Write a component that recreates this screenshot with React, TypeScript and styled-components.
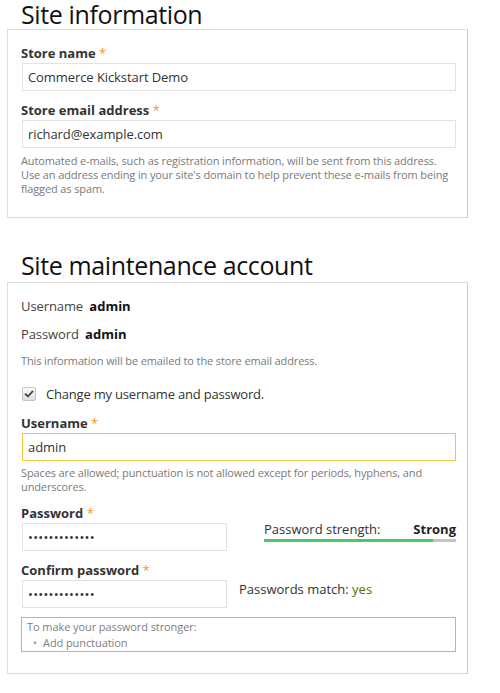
import React from 'react';
import styled, { createGlobalStyle } from 'styled-components';

const GlobalStyle = createGlobalStyle`
  body {
    margin: 0;
    background: #ffffff;
    font-family: 'Open Sans', 'DejaVu Sans', sans-serif;
    color: #333333;
  }
`;

const App = () => {
  return (
    <React.Fragment>
      <GlobalStyle />
      <Page>
        <Section>
          <Title $after={1}>Site information</Title>
          <Fieldset>
            <Label>
              Store name <Required>*</Required>
            </Label>
            <TextInput value="Commerce Kickstart Demo" readOnly />
            <Label $top={10}>
              Store email address <Required>*</Required>
            </Label>
            <TextInput value="richard@example.com" readOnly />
            <Description $top={6}>
              Automated e-mails, such as registration information, will be sent
              from this address. Use an address ending in your site's domain to
              help prevent these e-mails from being flagged as spam.
            </Description>
          </Fieldset>
        </Section>

        <Section $top={33}>
          <Title $after={3}>Site maintenance account</Title>
          <Fieldset>
            <InfoLine>
              Username <strong>admin</strong>
            </InfoLine>
            <InfoLine $top={10}>
              Password <strong>admin</strong>
            </InfoLine>
            <Description $top={11}>
              This information will be emailed to the store email address.
            </Description>
            <CheckRow>
              <CheckBox>
                <svg width="10" height="10" viewBox="0 0 10 10">
                  <path
                    d="M1.6 5.2 L4 7.4 L8.6 2.4"
                    fill="none"
                    stroke="#4a4a4a"
                    strokeWidth="1.9"
                    strokeLinecap="round"
                    strokeLinejoin="round"
                  />
                </svg>
              </CheckBox>
              Change my username and password.
            </CheckRow>

            <Label $top={11}>
              Username <Required>*</Required>
            </Label>
            <TextInput value="admin" readOnly $focused />
            <Description $top={5}>
              Spaces are allowed; punctuation is not allowed except for periods,
              hyphens, and underscores.
            </Description>

            <Label $top={10}>
              Password <Required>*</Required>
            </Label>
            <PasswordRow>
              <TextInput type="password" value="adminadmin123" readOnly $short />
              <Strength>
                <StrengthText>
                  <span>Password strength:</span>
                  <strong>Strong</strong>
                </StrengthText>
                <StrengthBar>
                  <StrengthFill style={{ width: '88%' }} />
                </StrengthBar>
              </Strength>
            </PasswordRow>

            <Label $top={10}>
              Confirm password <Required>*</Required>
            </Label>
            <PasswordRow>
              <TextInput type="password" value="adminadmin123" readOnly $short />
              <Match>
                Passwords match: <Yes>yes</Yes>
              </Match>
            </PasswordRow>

            <Suggestions>
              <div>To make your password stronger:</div>
              <SuggestionList>
                <li>Add punctuation</li>
              </SuggestionList>
            </Suggestions>
          </Fieldset>
        </Section>
      </Page>
    </React.Fragment>
  );
};

export default App;

const Page = styled.div`
  padding-left: 7px;
  width: 461px;
`;

const Section = styled.section<{ $top?: number }>`
  margin-top: ${(p) => p.$top || 0}px;
`;

const Title = styled.h2<{ $after: number }>`
  margin: 0 0 ${(p) => p.$after}px 14px;
  font-size: 25px;
  font-weight: 400;
  line-height: 28px;
  letter-spacing: -0.38px;
  color: #111111;
`;

const Fieldset = styled.div`
  border: 1px solid #dedede;
  border-right-color: #cacaca;
  border-bottom-color: #d6d6d6;
  padding: 14px 11px 21px 13px;
`;

const Label = styled.div<{ $top?: number }>`
  margin: ${(p) => p.$top || 0}px 0 1px;
  font-size: 13px;
  font-weight: 700;
  line-height: 18px;
  color: #333333;
`;

const Required = styled.span`
  color: #f7941d;
  font-weight: 400;
`;

const TextInput = styled.input<{ $focused?: boolean; $short?: boolean }>`
  display: block;
  box-sizing: border-box;
  width: ${(p) => (p.$short ? '205px' : '434px')};
  height: 28px;
  margin: 0 0 0 1px;
  padding: 0 5px;
  border: 1px solid ${(p) => (p.$focused ? '#f0c93a' : '#e2e2e2')};
  border-radius: 0;
  background: #ffffff;
  font-family: 'Open Sans', 'DejaVu Sans', sans-serif;
  font-size: 13px;
  letter-spacing: ${(p) => (p.type === 'password' ? '0.25px' : '-0.08px')};
  color: #333333;
  outline: none;
`;

const Description = styled.div<{ $top?: number }>`
  margin-top: ${(p) => p.$top || 0}px;
  font-size: 11px;
  line-height: 14px;
  letter-spacing: -0.12px;
  color: #7a7a7a;
`;

const InfoLine = styled.div<{ $top?: number }>`
  margin-top: ${(p) => p.$top || 0}px;
  font-size: 13px;
  line-height: 18px;
  letter-spacing: -0.1px;
  color: #444444;

  strong {
    margin-left: 3px;
    letter-spacing: 0;
    color: #111111;
  }
`;

const CheckRow = styled.div`
  display: flex;
  align-items: center;
  margin-top: 17px;
  font-size: 13px;
  line-height: 18px;
  letter-spacing: -0.2px;
  color: #333333;
`;

const CheckBox = styled.span`
  display: flex;
  align-items: center;
  justify-content: center;
  box-sizing: border-box;
  width: 14px;
  height: 14px;
  margin: 0 10px 0 1px;
  border: 1px solid #c4c4c4;
  border-radius: 2px;
  background: linear-gradient(#fbfbfb, #dedede);
`;

const PasswordRow = styled.div`
  display: flex;
  align-items: flex-start;
`;

const Strength = styled.div`
  width: 192px;
  margin: -2px 0 0 37px;
`;

const StrengthText = styled.div`
  display: flex;
  justify-content: space-between;
  font-size: 13px;
  line-height: 16px;
  color: #333333;

  strong {
    color: #222222;
  }
`;

const StrengthBar = styled.div`
  height: 3px;
  margin-top: 2px;
  background: #c4c4c4;
`;

const StrengthFill = styled.div`
  height: 100%;
  background: #47c965;
`;

const Match = styled.div`
  margin-left: 12px;
  font-size: 13px;
  line-height: 18px;
  color: #333333;
`;

const Yes = styled.span`
  color: #4a7400;
`;

const Suggestions = styled.div`
  margin-top: 9px;
  padding: 1px 5px 0;
  border: 1px solid #b4b4b4;
  font-size: 11px;
  line-height: 16px;
  letter-spacing: -0.08px;
  color: #808080;
`;

const SuggestionList = styled.ul`
  margin: 0;
  padding: 0;
  list-style: none;

  li {
    display: flex;
  }

  li::before {
    content: '•';
    width: 16px;
    text-align: center;
    color: #999999;
  }
`;
